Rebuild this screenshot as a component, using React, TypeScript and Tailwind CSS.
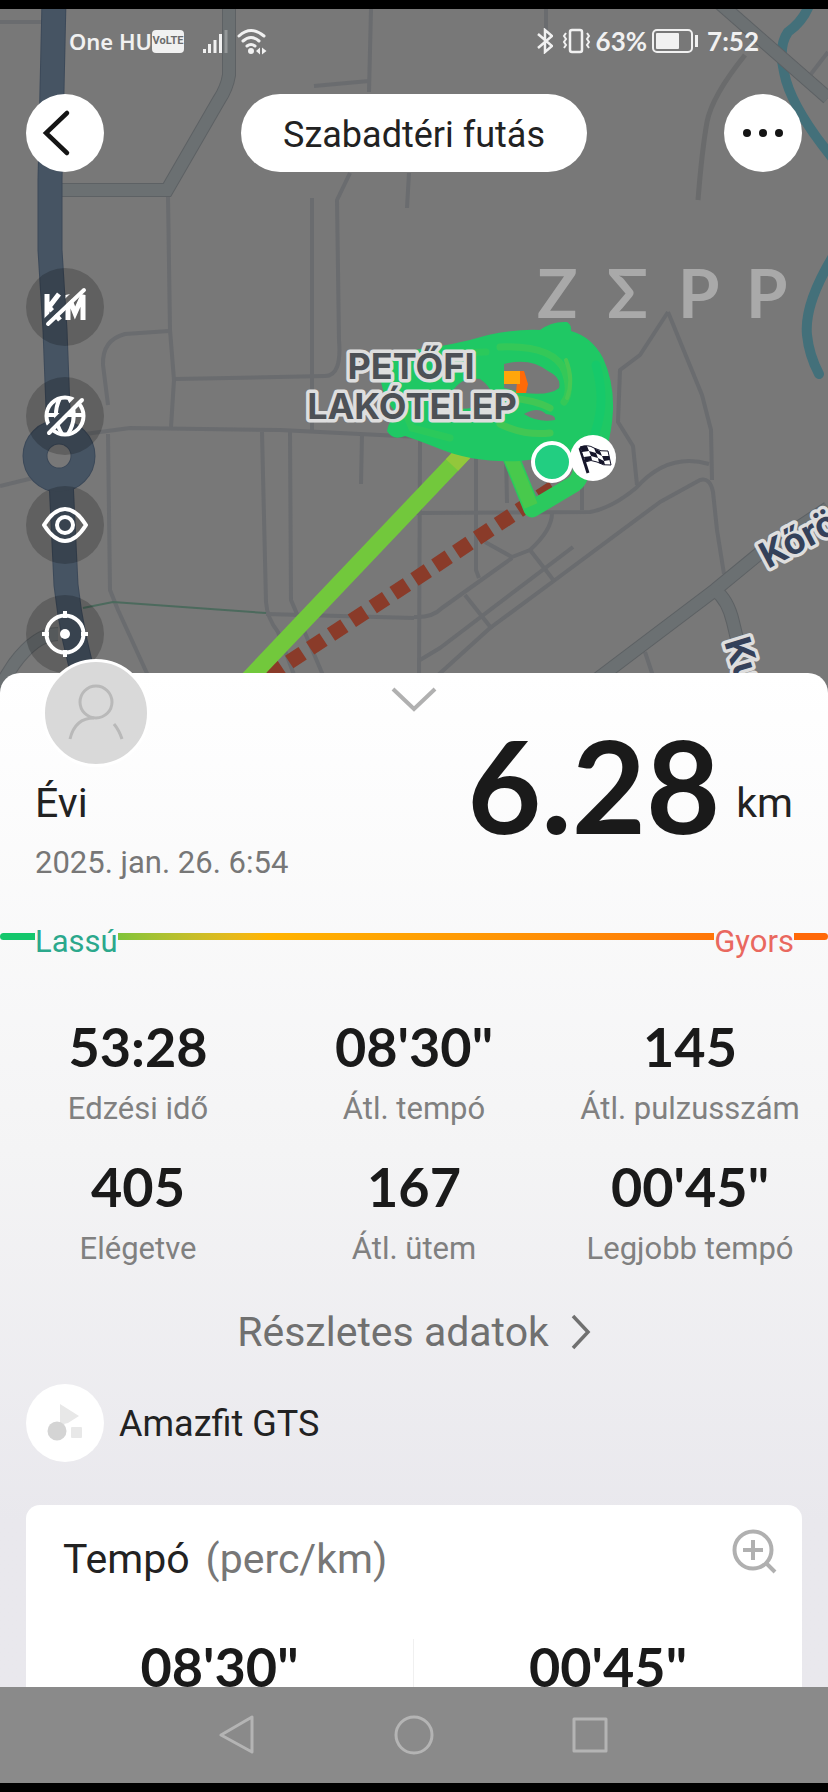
import React from "react";

const minorRoads = [
  "M0 22H44",
  "M371 9L369 92M314 86L369 81",
  "M350 173L337 200L339 340Q342 376 325 376L175 379",
  "M312 198V430",
  "M409 173L407 208",
  "M168 196L170 330L174 380L171 427",
  "M169 331L125 334Q102 340 103 365L108 405",
  "M85 434L130 428L280 430L420 437",
  "M108 434L110 590L118 610L150 680",
  "M262 432L266 602Q267 618 278 632L296 680",
  "M290 432L291 600L325 680",
  "M362 434L361 484",
  "M266 614L414 618",
  "M0 486L33 478",
  "M546 9V52",
  "M811 74L828 52",
  "M668 312L640 355L620 370L618 422L633 446L637 485",
  "M668 312L702 395L711 430L712 480",
  "M420 440L419 680",
  "M476 455V570L479 578",
  "M506 455L507 503",
  "M414 513L590 512Q612 508 636 488Q668 452 709 464",
  "M582 482V510",
  "M437 676L490 628L555 580L660 502L700 480Q710 477 713 492L717 530L724 574",
  "M414 617Q432 618 442 608L512 558",
  "M485 542L512 557L530 550L548 573L554 581",
  "M552 513Q552 530 530 550",
  "M420 660L440 648L573 547",
  "M465 595L492 629",
  "M645 652L653 676",
];

const wideRoads = [
  "M229 0V75Q227 88 219 100L167 190H60",
  "M716 0L828 98",
  "M-4 692L14 664Q36 634 58 634",
  "M596 680L715 590L760 553L828 508",
  "M715 590Q728 600 733 622L742 660",
];

function MapCanvas() {
  return (
    <svg
      className="absolute inset-0 h-full w-full"
      viewBox="0 9 828 688"
      preserveAspectRatio="xMidYMin slice"
      fill="none"
      aria-hidden="true"
    >
      <rect x="-400" width="1628" height="900" fill="#787878" />
      <path d="M745 55Q712 96 707 122Q702 150 698 200" stroke="#6a6b6c" strokeWidth="5" />
      <g stroke="#6a6c6f" strokeWidth="4" strokeLinejoin="round">
        {minorRoads.map((d) => (
          <path key={d} d={d} />
        ))}
      </g>
      <path d="M83 608L113 602L266 613" stroke="#4c6a5d" strokeWidth="2" />
      <g stroke="#43707a" strokeWidth="10" strokeLinecap="round" strokeLinejoin="round">
        <path d="M811 0Q805 20 788 32Q778 46 784 72Q790 106 834 160" />
        <path d="M832 258Q804 305 807 335Q809 355 819 374" />
      </g>
      <g stroke="#5d6164" strokeWidth="14">
        {wideRoads.map((d) => (
          <path key={d} d={d} />
        ))}
      </g>
      <g stroke="#6b7072" strokeWidth="12">
        {wideRoads.map((d) => (
          <path key={d} d={d} />
        ))}
      </g>
      <g stroke="#3c4959" strokeWidth="25">
        <path d="M54 0L50 180V250L55 330L59 435M61 480L66 585Q72 640 88 690" />
        <circle cx="59" cy="456" r="24" />
      </g>
      <g stroke="#465463" strokeWidth="23">
        <path d="M54 0L50 180V250L55 330L59 435M61 480L66 585Q72 640 88 690" />
        <circle cx="59" cy="456" r="24" />
      </g>

      <path d="M553 488L250 688" stroke="#8a3b29" strokeWidth="15" strokeDasharray="16 9" />
      <path d="M470 446L244 684" stroke="#72c83c" strokeWidth="17" />
      <path d="M470 446L452 465" stroke="#93c73b" strokeWidth="17" />
      <path d="M510 455L532 509L574 484Q582 478 582 462" stroke="#2bc95e" strokeWidth="17" strokeLinejoin="round" />
      <path d="M511 458L531 506" stroke="#48c94c" strokeWidth="14" />
      <path
        fillRule="evenodd"
        fill="#1fc864"
        d="M381 382Q382 356 414 350Q455 345 488 335Q515 329 540 330Q552 321 567 322Q572 325 571 331Q592 337 603 358Q614 382 613 410Q612 432 606 450L590 462Q550 456 520 461Q474 463 440 449Q420 441 405 436Q393 441 387 431Q388 421 398 415Q384 400 381 382ZM504 364Q530 357 548 371Q562 378 559 388Q550 396 524 393L504 388ZM524 414Q538 406 546 414Q556 415 555 420Q538 423 524 414ZM452 392Q462 376 480 379Q490 386 492 394Q480 412 454 408Z"
      />
      <g strokeLinecap="round" opacity=".4">
        <path d="M500 347Q555 345 565 372Q572 392 564 402" stroke="#55ca48" strokeWidth="7" />
        <path d="M566 360Q574 380 567 398" stroke="#86c83c" strokeWidth="4" />
        <path d="M510 398Q535 400 550 408M500 424Q525 436 550 433" stroke="#74c63e" strokeWidth="7" />
        <path d="M420 360Q450 352 486 352M400 400L412 428L450 438" stroke="#3fcb50" strokeWidth="7" />
        <path d="M596 365Q606 400 596 430L590 450" stroke="#0bcb74" strokeWidth="9" />
      </g>
      <path d="M518 371H524L528 384L526 393H516Z" fill="#ff6a08" />
      <path d="M504 371H520V384H504Z" fill="#ffa60a" />

      <g
        fontFamily="Inter, 'Noto Sans', sans-serif"
        fontWeight="700"
        stroke="#dedede"
        strokeWidth="7"
        strokeLinejoin="round"
        paintOrder="stroke"
      >
        <g fontSize="36" fill="#4d5156" textAnchor="middle">
          <text x="411" y="379">PETŐFI</text>
          <text x="412" y="419">LAKÓTELEP</text>
        </g>
        <g fontSize="36" fill="#34415a">
          <text transform="translate(768 569) rotate(-28)">Kőrösi</text>
          <text transform="translate(724 642) rotate(73)">Kun</text>
        </g>
      </g>

      <text
        x="537 607 678 746"
        y="318"
        fontFamily="Lato, sans-serif"
        fontWeight="700"
        fontSize="67"
        fill="#a9a9a9"
      >
        ZΣPP
      </text>

      <circle cx="593" cy="458" r="23" fill="#fff" />
      <g transform="translate(580 445)">
        <path d="M0 3L8 28" stroke="#15152a" strokeWidth="3" />
        <path d="M0 2Q8 -1 14 3Q21 7 28 6L31 20Q23 21 17 17Q11 14 5 17Z" fill="#fff" stroke="#15152a" strokeWidth="1" />
        <path d="M0 2Q4 0 7 1L9 6L2 7ZM14 3L20 6L22 11L16 8ZM9 6L16 8L18 13L11 11ZM22 11L29 11L30 15L24 16ZM4 12L11 11L12 15L5 17ZM18 13L24 16L25 20L19 18Z" fill="#15152a" />
      </g>
      <circle cx="552" cy="462" r="19" fill="#22ce81" stroke="#fff" strokeWidth="4" />
    </svg>
  );
}

function StatusBar() {
  return (
    <div className="relative flex h-16 items-center justify-between px-[69px] text-[#f1f1f1]">
      <div className="flex items-center">
        <span className="font-['Noto_Sans',sans-serif] text-[22px] leading-8 font-semibold">One HU</span>
        <span className="flex h-[23px] w-8 items-center justify-center rounded bg-[#f1f1f1] font-['Roboto',sans-serif] text-[11px] font-bold text-[#6c6c6c]">
          VoLTE
        </span>
        <svg className="ml-[18px] h-6 w-[27px]" viewBox="0 0 27 24" fill="none" stroke="currentColor" strokeWidth="3">
          <path d="M2.500 20V24M7.500 15V24M13 11V24M18.500 5V24" />
          <path d="M24 1V24" opacity=".3" />
        </svg>
        <svg className="ml-2 h-[27px] w-[30px]" viewBox="0 0 30 27" fill="none" stroke="currentColor" strokeWidth="3" strokeLinecap="round">
          <path d="M2 8Q14 -3 27 8M6 13Q14 6 22 13M10 18Q14 15 18 18" />
          <circle cx="14" cy="23" r="1.500" fill="currentColor" />
          <path d="M23 19.500L19 23L23 26.500ZM25 19.500L29.500 23L25 26.500Z" fill="currentColor" stroke="none" />
        </svg>
      </div>
      <div className="flex items-center font-['Lato',sans-serif] text-[26px] leading-8 font-bold">
        <svg className="h-[26px] w-4" viewBox="0 0 16 26" fill="none" stroke="currentColor" strokeWidth="2.500">
          <path d="M1 6L15 18L8 24V2L15 8L1 20" />
        </svg>
        <svg className="ml-2 h-[26px] w-[31px]" viewBox="0 0 31 26" fill="none" stroke="currentColor" strokeWidth="2.500">
          <rect x="9" y="2" width="12" height="22" rx="2" />
          <path d="M5 5L3 8L5 11L3 14L5 17L3 20M26 5L28 8L26 11L28 14L26 17L28 20" strokeWidth="2" />
        </svg>
        <span className="ml-1">63%</span>
        <svg className="ml-1 h-[26px] w-12" viewBox="0 0 48 26" fill="none" stroke="currentColor" strokeWidth="2">
          <rect x="2" y="2" width="39" height="22" rx="4" />
          <rect x="5" y="5" width="23" height="16" rx="1" fill="currentColor" stroke="none" />
          <path d="M45.500 7V19" strokeWidth="3" />
        </svg>
        <span className="ml-2">7:52</span>
      </div>
    </div>
  );
}

const mapButton =
  "flex size-[78px] items-center justify-center rounded-full bg-black/20 text-white";

function MapControls() {
  return (
    <div className="relative mt-24 flex flex-col gap-[31px] pl-[26px]">
      <button type="button" aria-label="Kilométerjelzők elrejtése" className={mapButton}>
        <svg className="size-12" viewBox="0 0 48 48" fill="none" stroke="currentColor">
          <mask id="km-gap">
            <rect width="48" height="48" fill="#fff" />
            <path d="M2 40L40 4" stroke="#000" strokeWidth="5" />
          </mask>
          <path d="M6 11V37M18 11L8 24L19 37M27 37V12L34 30L42 12V37" strokeWidth="5" mask="url(#km-gap)" />
          <path d="M7 41L43 7" strokeWidth="4" strokeLinecap="round" />
        </svg>
      </button>
      <button type="button" aria-label="Térkép elrejtése" className={mapButton}>
        <svg className="size-12" viewBox="0 0 48 48" fill="none" stroke="currentColor" strokeWidth="4">
          <mask id="globe-gap">
            <rect width="48" height="48" fill="#fff" />
            <path d="M3 40L38 5" stroke="#000" strokeWidth="5" />
          </mask>
          <g mask="url(#globe-gap)">
            <circle cx="24" cy="24" r="18.500" />
            <path d="M6 23H42M19 6Q10 24 21 42M28 6Q38 24 27 42" />
          </g>
          <path d="M8 41L41 8" strokeLinecap="round" />
        </svg>
      </button>
      <button type="button" aria-label="Nézet" className={mapButton}>
        <svg className="size-12" viewBox="0 0 48 48" fill="none" stroke="currentColor" strokeWidth="4" strokeLinejoin="round">
          <path d="M3 24Q13 8 24 8T45 24Q35 40 24 40T3 24Z" />
          <circle cx="24" cy="24" r="8" />
        </svg>
      </button>
      <button type="button" aria-label="Középre igazítás" className={mapButton}>
        <svg className="size-12" viewBox="0 0 48 48" fill="none" stroke="currentColor" strokeWidth="4">
          <circle cx="24" cy="24" r="18.500" />
          <circle cx="24" cy="24" r="5" fill="currentColor" stroke="none" />
          <path d="M24 1V8M24 40V47M1 24H8M40 24H47" />
        </svg>
      </button>
    </div>
  );
}

const stats = [
  { value: "53:28", label: "Edzési idő" },
  { value: "08'30\"", label: "Átl. tempó" },
  { value: "145", label: "Átl. pulzusszám" },
  { value: "405", label: "Elégetve" },
  { value: "167", label: "Átl. ütem" },
  { value: "00'45\"", label: "Legjobb tempó" },
];

const figure = "font-['Lato',sans-serif] text-[54px] leading-[56px] font-bold text-[#1a1a1a]";

export default function App() {
  return (
    <div className="flex h-screen flex-col overflow-hidden border-y-[9px] border-black bg-[#e9e8ed] font-['Roboto',sans-serif] text-[#222]">
      <main className="min-h-0 flex-1 overflow-hidden">
        <section className="relative overflow-hidden pb-6">
          <MapCanvas />
          <StatusBar />
          <header className="relative mt-[21px] flex items-center justify-between px-[26px]">
            <button type="button" aria-label="Vissza" className="flex size-[78px] items-center justify-center rounded-full bg-white">
              <svg className="size-12" viewBox="0 0 48 48" fill="none" stroke="#151515" strokeWidth="4.500" strokeLinecap="round">
                <path d="M26 4L5 24L26 44" />
              </svg>
            </button>
            <h1 className="flex h-[78px] items-center rounded-full bg-white px-[42px] pt-1 text-[36px]">Szabadtéri futás</h1>
            <button type="button" aria-label="Továbbiak" className="flex size-[78px] items-center justify-center gap-2 rounded-full bg-white">
              <span className="size-2 rounded-full bg-[#151515]" />
              <span className="size-2 rounded-full bg-[#151515]" />
              <span className="size-2 rounded-full bg-[#151515]" />
            </button>
          </header>
          <MapControls />
        </section>

        <section className="relative -mt-6 rounded-t-[20px] bg-linear-to-b from-white via-[#f4f4f5] via-45% to-[#e9e8ed] to-80%">
          <button type="button" aria-label="Panel lecsukása" className="absolute top-[14px] left-1/2 -translate-x-1/2">
            <svg className="h-[26px] w-[46px]" viewBox="0 0 46 26" fill="none" stroke="#b0b0b0" strokeWidth="4">
              <path d="M2 2L23 22L44 2" />
            </svg>
          </button>
          <div className="flex items-start justify-between px-[35px]">
            <div>
              <div className="-mt-[14px] ml-[7px] flex size-[108px] items-center justify-center rounded-full border-[3px] border-white bg-[#d9d9d9]">
                <svg className="size-[60px]" viewBox="0 0 60 60" fill="none" stroke="#b9b9b9" strokeWidth="3">
                  <circle cx="30" cy="19" r="16" />
                  <path d="M4 56Q9 35 28 35M48 41Q53 47 56 56" />
                </svg>
              </div>
              <p className="mt-3 text-[41px] leading-12">Évi</p>
              <p className="mt-4 text-[31px] leading-10 text-[#777]">2025. jan. 26. 6:54</p>
            </div>
            <p className="mt-12 flex items-center">
              <span className="font-['Lato',sans-serif] text-[128px] leading-[128px] font-bold text-[#1a1a1a]">6.28</span>
              <span className="mt-9 ml-4 text-[41px] leading-12">km</span>
            </p>
          </div>

          <div className="mt-[27px] flex items-center text-[31px] leading-10">
            <span className="h-[7px] w-[35px] rounded-l-full bg-[#14c76c]" />
            <span className="mt-3 text-[#2ba88c]">Lassú</span>
            <span className="h-[7px] flex-1 bg-linear-to-r from-[#7fc43a] via-[#ffb400] via-25% to-[#ff7608]" />
            <span className="mt-3 text-[#e9685f]">Gyors</span>
            <span className="h-[7px] w-[34px] rounded-r-full bg-[#ff6808]" />
          </div>

          <dl className="mt-[57px] grid grid-cols-3 gap-y-[30px] text-center">
            {stats.map((s) => (
              <div key={s.label} className="flex flex-col-reverse gap-[14px]">
                <dt className="text-[31px] leading-10 whitespace-nowrap text-[#808080]">{s.label}</dt>
                <dd className={figure}>{s.value}</dd>
              </div>
            ))}
          </dl>

          <a href="#reszletek" className="mt-[39px] flex items-center justify-center gap-[22px] text-[41px] leading-12 text-[#707070]">
            Részletes adatok
            <svg className="h-9 w-5" viewBox="0 0 20 36" fill="none" stroke="currentColor" strokeWidth="3.500">
              <path d="M2 2L17 18L2 34" />
            </svg>
          </a>

          <div className="mt-7 flex items-center gap-[15px] px-[26px] text-[36px]">
            <span className="flex size-[78px] items-center justify-center rounded-full bg-white">
              <svg className="size-10" viewBox="0 0 40 40">
                <path d="M15 1L34 13L23 20L15 22Z" fill="#e8e8e8" />
                <rect x="26" y="24" width="11" height="11" rx="1" fill="#e8e8e8" />
                <circle cx="12" cy="28" r="9.500" fill="#d4d4d4" />
              </svg>
            </span>
            <span className="pt-0.5">Amazfit GTS</span>
          </div>

          <article className="mx-[26px] mt-[43px] rounded-[14px] bg-white pt-[30px] pb-10">
            <div className="flex items-start justify-between pr-[25px] pl-[37px]">
              <h2 className="flex gap-4 text-[41px] leading-12">
                Tempó <span className="text-[#777]">(perc/km)</span>
              </h2>
              <button type="button" aria-label="Nagyítás" className="-mt-2">
                <svg className="size-12" viewBox="0 0 48 48" fill="none" stroke="#b0b0b0" strokeWidth="4">
                  <circle cx="24" cy="23" r="18.500" />
                  <path d="M24 13V33M14 23H34M37 36L46 45" />
                </svg>
              </button>
            </div>
            <div className="mt-14 grid grid-cols-2 divide-x divide-[#f0f0f0] text-center">
              <p className={figure}>08'30"</p>
              <p className={figure}>00'45"</p>
            </div>
          </article>
        </section>
      </main>

      <nav className="flex h-24 shrink-0 items-center justify-center gap-[136px] bg-[#8a8a8a]">
        <button type="button" aria-label="Vissza a rendszerben">
          <svg className="size-10" viewBox="0 0 40 40" fill="none" stroke="#b4b4b4" strokeWidth="3" strokeLinejoin="round">
            <path d="M34 2V37L3 20Z" />
          </svg>
        </button>
        <button type="button" aria-label="Kezdőképernyő">
          <svg className="size-10" viewBox="0 0 40 40" fill="none" stroke="#b4b4b4" strokeWidth="3">
            <circle cx="20" cy="20" r="18" />
          </svg>
        </button>
        <button type="button" aria-label="Legutóbbi alkalmazások">
          <svg className="size-10" viewBox="0 0 40 40" fill="none" stroke="#b4b4b4" strokeWidth="3" strokeLinejoin="round">
            <rect x="4" y="4" width="32" height="32" />
          </svg>
        </button>
      </nav>
    </div>
  );
}
